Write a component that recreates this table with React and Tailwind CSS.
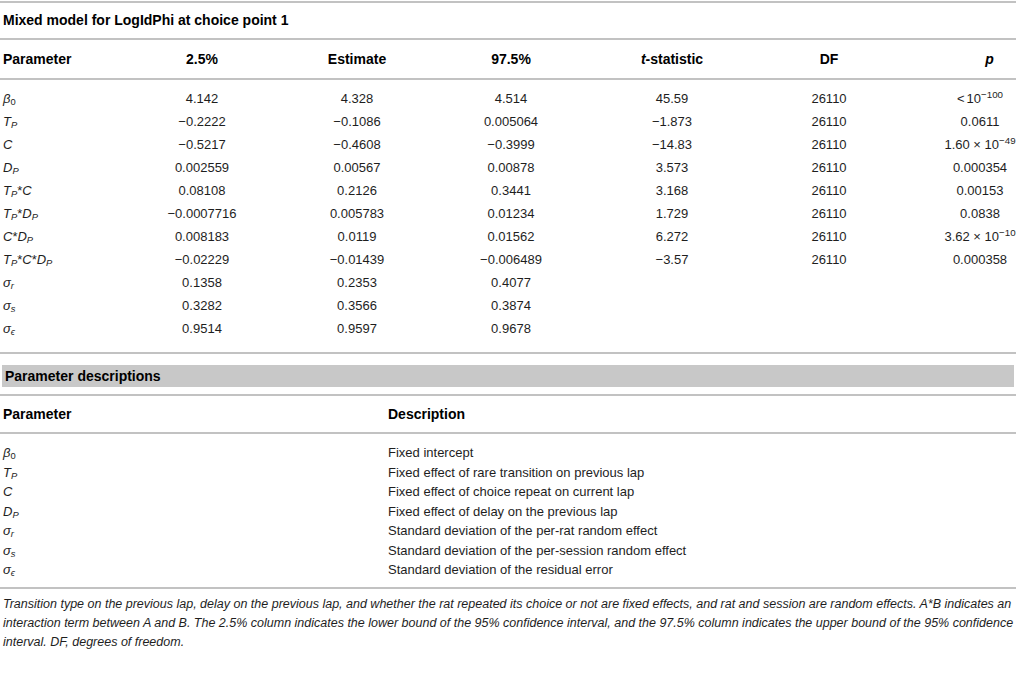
import React from "react";

const FONT = { fontFamily: '"Liberation Sans", Arial, sans-serif' };

const Sym = ({ s, sub, subItalic = true }) => (
  <span>
    <i>{s}</i>
    {sub !== undefined && <sub className="text-[72%]">{subItalic ? <i>{sub}</i> : sub}</sub>}
  </span>
);

const B0 = () => <Sym s="β" sub="0" subItalic={false} />;
const TP = () => <Sym s="T" sub="P" />;
const Cc = () => <i>C</i>;
const DP = () => <Sym s="D" sub="P" />;
const SR = () => <Sym s="σ" sub="r" />;
const SS = () => <Sym s="σ" sub="s" />;
const SE = () => <Sym s="σ" sub="ϵ" />;
const St = () => <span>*</span>;

const Pow = ({ pre, exp }) => (
  <span>
    {pre}10<sup className="text-[75%]">{exp}</sup>
  </span>
);

const rows1 = [
  [<B0 />, "4.142", "4.328", "4.514", "45.59", "26110", <Pow pre={<span className="mr-[2px]">&lt;</span>} exp="−100" />],
  [<TP />, "−0.2222", "−0.1086", "0.005064", "−1.873", "26110", "0.0611"],
  [<Cc />, "−0.5217", "−0.4608", "−0.3999", "−14.83", "26110", <Pow pre="1.60 × " exp="−49" />],
  [<DP />, "0.002559", "0.00567", "0.00878", "3.573", "26110", "0.000354"],
  [<><TP /><St /><Cc /></>, "0.08108", "0.2126", "0.3441", "3.168", "26110", "0.00153"],
  [<><TP /><St /><DP /></>, "−0.0007716", "0.005783", "0.01234", "1.729", "26110", "0.0838"],
  [<><Cc /><St /><DP /></>, "0.008183", "0.0119", "0.01562", "6.272", "26110", <Pow pre="3.62 × " exp="−10" />],
  [<><TP /><St /><Cc /><St /><DP /></>, "−0.02229", "−0.01439", "−0.006489", "−3.57", "26110", "0.000358"],
  [<SR />, "0.1358", "0.2353", "0.4077", "", "", ""],
  [<SS />, "0.3282", "0.3566", "0.3874", "", "", ""],
  [<SE />, "0.9514", "0.9597", "0.9678", "", "", ""],
];

const rows2 = [
  [<B0 />, "Fixed intercept"],
  [<TP />, "Fixed effect of rare transition on previous lap"],
  [<Cc />, "Fixed effect of choice repeat on current lap"],
  [<DP />, "Fixed effect of delay on the previous lap"],
  [<SR />, "Standard deviation of the per-rat random effect"],
  [<SS />, "Standard deviation of the per-session random effect"],
  [<SE />, "Standard deviation of the residual error"],
];

const Rule = ({ className = "" }) => <div className={`h-[2px] bg-[#c2c2c2] ${className}`} />;

const GRID = "grid grid-cols-[125px_154px_156px_152px_170px_144px_115px]";

export default function App() {
  return (
    <div className="w-[1016px] h-[673px] bg-white text-[#1e1e1e] overflow-hidden" style={FONT}>
      <div className="h-[1px]" />
      <Rule />
      <div className="h-[35px] flex items-center pl-[3px] text-[14px] font-bold text-black">
        Mixed model for LogIdPhi at choice point 1
      </div>
      <Rule />
      <div className={`${GRID} h-[38px] items-center text-[14px] font-bold text-black`}>
        <div className="pl-[3px]">Parameter</div>
        <div className="flex justify-center">2.5%</div>
        <div className="flex justify-center">Estimate</div>
        <div className="flex justify-center">97.5%</div>
        <div className="flex justify-center"><span><i>t</i>-statistic</span></div>
        <div className="flex justify-center">DF</div>
        <div className="flex justify-center pl-[62px]"><i>p</i></div>
      </div>
      <Rule />
      <div className="pt-[7px] pb-[12px] text-[13px]">
        {rows1.map((r, i) => (
          <div key={i} className={`${GRID} h-[23px] items-center`}>
            <div className="pl-[3px] whitespace-nowrap">{r[0]}</div>
            {r.slice(1).map((c, j) => (
              <div key={j} className={`flex justify-center whitespace-nowrap ${j === 5 ? "pl-[43px]" : ""}`}>
                {c}
              </div>
            ))}
          </div>
        ))}
      </div>
      <Rule />
      <div className="mt-[11px] mx-[2px] h-[22px] bg-[#c8c8c8] flex items-center pl-[3px] text-[14px] font-bold text-black">
        Parameter descriptions
      </div>
      <div className="h-[7px]" />
      <Rule />
      <div className="grid grid-cols-[388px_1fr] h-[36px] items-center text-[14px] font-bold text-black">
        <div className="pl-[3px]">Parameter</div>
        <div>Description</div>
      </div>
      <Rule />
      <div className="pt-[9px] pb-[7px] text-[13px]">
        {rows2.map((r, i) => (
          <div key={i} className="grid grid-cols-[388px_1fr] h-[19.5px] items-center">
            <div className="pl-[3px] whitespace-nowrap">{r[0]}</div>
            <div className="whitespace-nowrap">{r[1]}</div>
          </div>
        ))}
      </div>
      <Rule />
      <div className="pt-[6px] pl-[3px] text-[12.5px] italic leading-[19px] text-[#1e1e1e]">
        <div className="whitespace-nowrap">
          Transition type on the previous lap, delay on the previous lap, and whether the rat repeated its choice or not are fixed effects, and rat and session are random effects. A*B indicates an
        </div>
        <div className="whitespace-nowrap">
          interaction term between A and B. The 2.5% column indicates the lower bound of the 95% confidence interval, and the 97.5% column indicates the upper bound of the 95% confidence
        </div>
        <div className="whitespace-nowrap">interval. DF, degrees of freedom.</div>
      </div>
    </div>
  );
}
